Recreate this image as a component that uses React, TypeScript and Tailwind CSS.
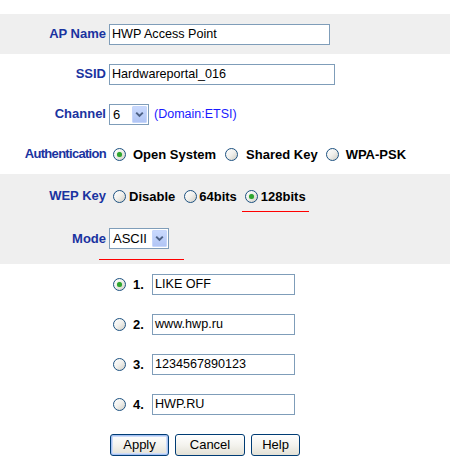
import React from "react";

const Label = ({ children, tight }: { children: React.ReactNode; tight?: boolean }) => (
  <div
    className={
      tight
        ? "w-[106px] mr-[3px] text-right text-[13px] font-bold tracking-[-0.7px] text-[#1a33a0] leading-[16px] whitespace-nowrap"
        : "w-[106px] mr-[3px] text-right text-[13px] font-bold text-[#1a33a0] leading-[16px] whitespace-nowrap"
    }
  >
    {children}
  </div>
);

const Radio = ({ checked }: { checked?: boolean }) => (
  <span className="flex items-center justify-center w-[13px] h-[13px] rounded-full border border-[#1c5180] bg-gradient-to-br from-white via-[#f1f0ec] to-[#cfcdc4] shrink-0">
    {checked && <span className="w-[5px] h-[5px] rounded-full bg-[#2ea52e] shadow-[0_0_1px_#7fd07f]" />}
  </span>
);

const TextInput = ({ value, w }: { value: string; w: string }) => (
  <div
    className={`${w} h-[21px] border border-[#7f9db9] bg-white pl-[2px] text-[12.6px] leading-[19px] text-black whitespace-nowrap overflow-hidden`}
  >
    {value}
  </div>
);

const Select = ({ value, w }: { value: string; w: string }) => (
  <div className={`${w} h-[21px] flex border border-[#7f9db9] bg-white`}>
    <span className="flex-1 pl-[3px] text-[13px] leading-[19px] text-black">{value}</span>
    <span className="w-[15px] my-px mr-px flex items-center justify-center rounded-[1px] border border-[#c6d6fb] bg-gradient-to-b from-[#c9d9fd] to-[#b1c5f5]">
      <svg width="9" height="7" viewBox="0 0 9 7">
        <path d="M1.2 1.6 L4.5 4.9 L7.8 1.6" fill="none" stroke="#4d6185" strokeWidth="2" />
      </svg>
    </span>
  </div>
);

const Btn = ({ children, w, def }: { children: React.ReactNode; w: string; def?: boolean }) => (
  <div
    className={`${w} h-[22px] rounded-[3px] border border-[#003c74] bg-gradient-to-b from-white via-[#f4f3ee] to-[#e3e1d6] flex items-center justify-center text-[13px] text-black ${
      def ? "shadow-[inset_0_0_0_1px_#a6c1f2,inset_0_0_0_2px_#cddcf8]" : ""
    }`}
  >
    {children}
  </div>
);

const Opt = ({ children }: { children: React.ReactNode }) => (
  <span className="text-[13px] font-bold text-black leading-[15px] whitespace-nowrap">{children}</span>
);

export default function App() {
  return (
    <div className="w-[450px] h-[470px] bg-white pt-[14px] font-['Liberation_Sans',Arial,sans-serif]">
      <div className="h-[40px] bg-[#efefef] flex items-center">
        <Label>AP Name</Label>
        <TextInput value="HWP Access Point" w="w-[221px]" />
      </div>
      <div className="h-[40px] flex items-center">
        <Label>SSID</Label>
        <TextInput value="Hardwareportal_016" w="w-[226px]" />
      </div>
      <div className="h-[40px] flex items-center">
        <Label>Channel</Label>
        <Select value="6" w="w-[40px]" />
        <span className="ml-[5px] text-[12.5px] text-[#1a1aff] leading-[15px]">(Domain:ETSI)</span>
      </div>
      <div className="h-[40px] flex items-center">
        <Label tight>Authentication</Label>
        <span className="ml-[4px] flex items-center">
          <Radio checked />
          <span className="ml-[7px]"><Opt>Open System</Opt></span>
          <span className="ml-[9px]"><Radio /></span>
          <span className="ml-[8px]"><Opt>Shared Key</Opt></span>
          <span className="ml-[8px]"><Radio /></span>
          <span className="ml-[7px]"><Opt>WPA-PSK</Opt></span>
        </span>
      </div>
      <div className="bg-[#efefef]">
        <div className="h-[44px] flex items-center">
          <Label>WEP Key</Label>
          <span className="ml-[4px] flex items-center">
            <Radio />
            <span className="ml-[3px]"><Opt>Disable</Opt></span>
            <span className="ml-[9px]"><Radio /></span>
            <span className="ml-[2px]"><Opt>64bits</Opt></span>
            <span className="ml-[5px] flex items-center px-[3px] pt-[4px] pb-[3px] border-b border-solid border-b-[#ff0000]">
              <Radio checked />
              <span className="ml-[3px]"><Opt>128bits</Opt></span>
            </span>
          </span>
        </div>
        <div className="pt-[10px] flex items-center h-[31px] box-border">
          <Label>Mode</Label>
          <Select value="ASCII" w="w-[60px]" />
        </div>
        <div className="mt-[10px] ml-[99px] w-[85px] h-px bg-[#ff0000]" />
        <div className="h-[4px]" />
      </div>
      {[
        { n: "1.", v: "LIKE OFF", c: true },
        { n: "2.", v: "www.hwp.ru" },
        { n: "3.", v: "1234567890123" },
        { n: "4.", v: "HWP.RU" },
      ].map((r) => (
        <div key={r.n} className="h-[40px] flex items-center pl-[113px]">
          <Radio checked={r.c} />
          <span className="ml-[7px] w-[19px]"><Opt>{r.n}</Opt></span>
          <TextInput value={r.v} w="w-[143px]" />
        </div>
      ))}
      <div className="pt-[10px] flex gap-[6px] pl-[110px]">
        <Btn w="w-[59px]" def>Apply</Btn>
        <Btn w="w-[70px]">Cancel</Btn>
        <Btn w="w-[49px]">Help</Btn>
      </div>
    </div>
  );
}
